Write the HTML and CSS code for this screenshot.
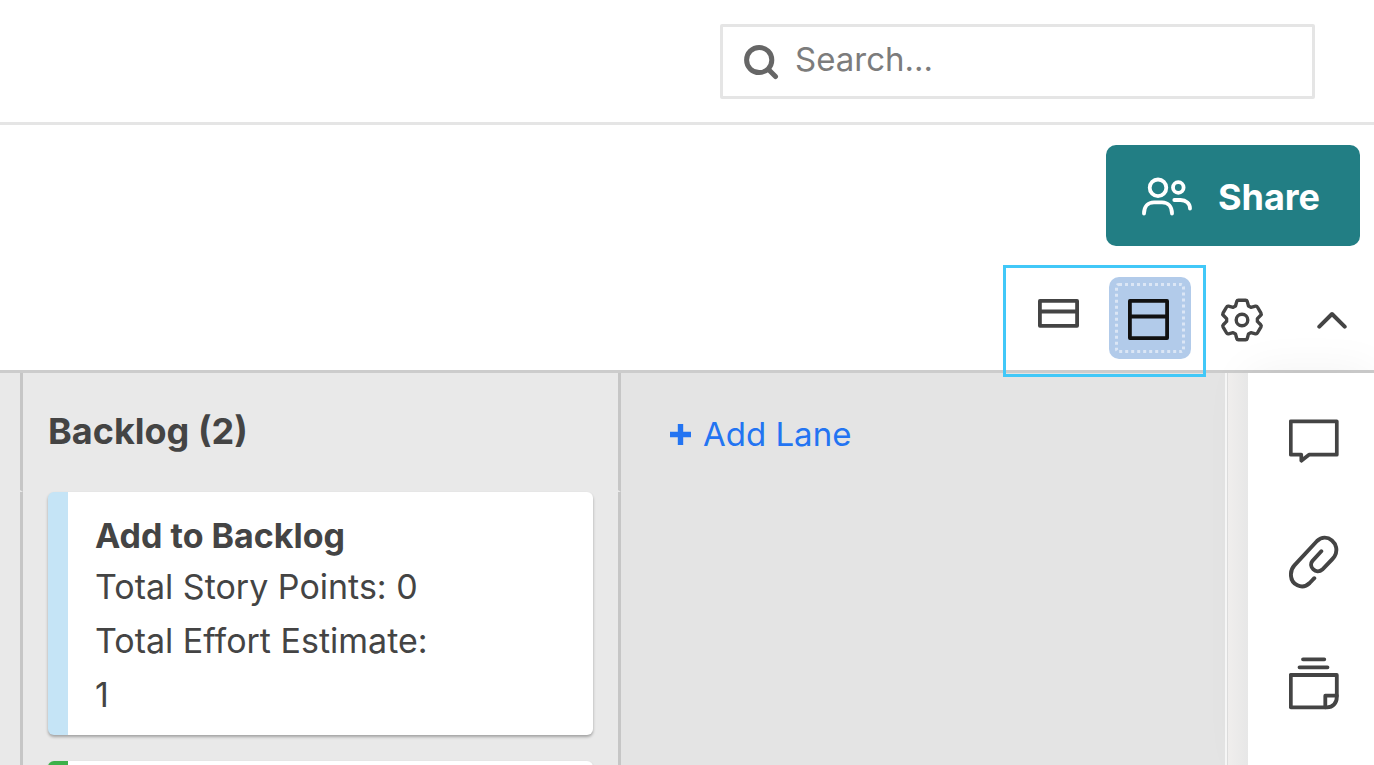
FILE: index.html
```html
<!DOCTYPE html>
<html lang="en">
<head>
    <meta charset="UTF-8">
    <meta name="viewport" content="width=device-width, initial-scale=1.0">
    <title>Board - Card View</title>
    <link rel="stylesheet" href="styles.css">
</head>
<body>
    <!-- Header -->
    <header class="header">
        <label class="search">
            <svg width="35" height="36" viewBox="0 0 35 36" fill="none" stroke="#666" stroke-width="5" stroke-linecap="round">
                <circle cx="15.2" cy="16" r="12.6"/>
                <path d="M25 26L31.5 32.5"/>
            </svg>
            <input type="search" class="search-input" placeholder="Search..." aria-label="Search">
        </label>
    </header>

    <!-- Share -->
    <div class="actions">
        <button type="button" class="share">
            <svg width="50" height="39" viewBox="0 0 50 39" fill="none" stroke="#fff" stroke-width="3.8" stroke-linecap="round">
                <circle cx="16" cy="10.8" r="8.3"/>
                <circle cx="36.3" cy="10.5" r="5.3"/>
                <path d="M2 36.5C2 29.5 6 25.3 12 25.3H20C26 25.3 30 29.5 30 36.5"/>
                <path d="M32.3 23H38.5C44 23 48 26.5 48 31.5"/>
            </svg>
            Share
        </button>
    </div>

    <!-- Toolbar -->
    <div class="toolbar">
        <div class="view-switch">
            <button type="button" class="view-button" aria-label="Compact view">
                <svg width="41" height="41" viewBox="0 0 41 41" fill="none" stroke="#444" stroke-width="3.8" stroke-linejoin="round">
                    <path d="M1.9 1.9H39.1V26.8H1.9ZM1.9 12.5H39.1"/>
                </svg>
            </button>
            <button type="button" class="view-button selected" aria-label="Full view">
                <svg width="41" height="41" viewBox="0 0 41 41" fill="none" stroke="#111" stroke-width="3.8" stroke-linejoin="round">
                    <path d="M1.9 1.9H39.1V39.1H1.9ZM1.9 17.5H39.1"/>
                </svg>
            </button>
        </div>
        <button type="button" class="icon-button settings" aria-label="Settings">
            <svg width="44" height="44" viewBox="-22 -22 44 44" fill="none" stroke="#444" stroke-width="3.4" stroke-linejoin="round">
                <path d="M-6.5-14L-5.2-18.6Q-4.8-19.8-3.6-19.8H3.6Q4.8-19.8 5.2-18.6L6.5-14L8.9-12.6L13.5-13.8Q14.8-14.1 15.4-13L19-6.8Q19.6-5.7 18.7-4.8L15.4-1.4V1.4L18.7 4.8Q19.6 5.7 19 6.8L15.4 13Q14.8 14.1 13.5 13.8L8.9 12.6L6.5 14L5.2 18.6Q4.8 19.8 3.6 19.8H-3.6Q-4.8 19.8-5.2 18.6L-6.5 14L-8.9 12.6L-13.5 13.8Q-14.8 14.1-15.4 13L-19 6.8Q-19.6 5.7-18.7 4.8L-15.4 1.4V-1.4L-18.7-4.8Q-19.6-5.7-19-6.8L-15.4-13Q-14.8-14.1-13.5-13.8L-8.9-12.6Z"/>
                <circle r="5.8"/>
            </svg>
        </button>
        <button type="button" class="icon-button" aria-label="Collapse">
            <svg width="30" height="18" viewBox="0 0 30 18" fill="none" stroke="#444" stroke-width="4" stroke-linecap="round" stroke-linejoin="round">
                <path d="M2.3 15.7L15 3L27.7 15.7"/>
            </svg>
        </button>
    </div>

    <!-- Board -->
    <main class="board">
        <section class="lane lane-previous">
            <div class="lane-head"></div>
            <div class="lane-body"></div>
        </section>

        <section class="lane lane-backlog">
            <div class="lane-head">
                <h2 class="lane-title">Backlog (2)</h2>
            </div>
            <div class="lane-body">
                <article class="card card-blue">
                    <h3 class="card-title">Add to Backlog</h3>
                    <p class="card-text">Total Story Points: 0</p>
                    <p class="card-text">Total Effort Estimate:<br>1</p>
                </article>
                <article class="card card-green"></article>
            </div>
        </section>

        <section class="new-lane">
            <button type="button" class="add-lane">
                <svg width="21" height="21" viewBox="0 0 21 21" fill="none" stroke="#2374f2" stroke-width="5.4">
                    <path d="M0 10.5H21M10.5 0V21"/>
                </svg>
                Add Lane
            </button>
        </section>

        <div class="gutter"></div>

        <!-- Side rail -->
        <aside class="rail">
            <button type="button" class="rail-button" aria-label="Comments">
                <svg width="50" height="44" viewBox="0 0 50 44" fill="none" stroke="#444" stroke-width="3.7" stroke-linejoin="round">
                    <path d="M1.8 2.3H47.8V35.7H20L12.3 41.7V35.7H1.8Z"/>
                </svg>
            </button>
            <button type="button" class="rail-button" aria-label="Attachments">
                <svg width="50" height="54" viewBox="0 0 50 54" fill="none" stroke="#444" stroke-width="3.9" stroke-linecap="round">
                    <path d="M25.3 43.2L20.7 48C13 55.5 1.9 49.5 1.9 39.5C1.9 36 3 33 5.4 30.4L28 6C37.5-3.5 52.5 9 45.6 21.3C45 22.3 44 23.5 43 24.5L33.3 34.5C27 40 19 31.5 23.4 26L32.3 16.3"/>
                </svg>
            </button>
            <button type="button" class="rail-button" aria-label="Proofs">
                <svg width="50" height="53" viewBox="0 0 50 53" fill="none" stroke="#444" stroke-width="3.8" stroke-linecap="round" stroke-linejoin="round">
                    <path d="M14 2.3H35.3M10.5 10.3H38.5"/>
                    <path d="M1.8 18H47.8V40C47.8 46 44 50.3 38 50.3H1.8Z"/>
                    <path d="M47.8 38.7H36.3V50.3"/>
                </svg>
            </button>
        </aside>
    </main>
</body>
</html>
```
FILE: styles.css
```css
* {
    box-sizing: border-box;
}

body {
    margin: 0;
    height: 100vh;
    display: flex;
    flex-direction: column;
    background-color: #fff;
    color: #444;
    font-family: Inter, "Liberation Sans", sans-serif;
    font-size: 34px;
}

button {
    padding: 0;
    border: none;
    background: none;
    font: inherit;
    cursor: pointer;
}

svg {
    display: block;
    flex: none;
}

h2, h3, p {
    margin: 0;
}

/* Header */
.header {
    display: flex;
    justify-content: flex-end;
    padding: 24px 59px 23px;
    border-bottom: 3px solid #e5e5e5;
}

.search {
    display: flex;
    align-items: center;
    gap: 16px;
    width: 595px;
    height: 75px;
    padding: 0 21px;
    border: 3px solid #e5e5e5;
    border-radius: 2px;
}

.search-input {
    flex: 1;
    min-width: 0;
    padding: 0 0 6px;
    border: none;
    outline: none;
    background: none;
    color: #444;
    font: inherit;
    font-size: 33px;
}

.search-input::placeholder {
    color: #7c7c7c;
}

/* Share */
.actions {
    display: flex;
    justify-content: flex-end;
    padding: 20px 14px 0;
}

.share {
    display: flex;
    align-items: center;
    justify-content: center;
    gap: 26px;
    width: 254px;
    height: 101px;
    padding: 2px 4px 0 0;
    border-radius: 10px;
    background-color: #227e84;
    color: #fff;
    font-size: 36px;
    font-weight: 700;
}

/* Toolbar */
.toolbar {
    display: flex;
    justify-content: flex-end;
    align-items: center;
    height: 127px;
    padding: 24px 27px 0 0;
    border-bottom: 3px solid #ccc;
}

.view-switch {
    position: relative;
    z-index: 2;
    display: flex;
    align-self: flex-start;
    gap: 8px;
    margin-top: -5px;
    padding: 9px 12px 15px 13px;
    border: 3px solid #41c8f8;
}

.view-button {
    display: flex;
    align-items: center;
    justify-content: center;
    width: 82px;
    height: 82px;
    padding: 2px 4px 0 0;
    border-radius: 10px;
}

.view-button.selected {
    background-color: #b2cbea;
    outline: 3px dotted #dbe6f5;
    outline-offset: -9px;
}

.icon-button {
    position: relative;
    z-index: 2;
}

.settings {
    margin: 0 53px 0 14px;
}

/* Board */
.board {
    flex: 1;
    display: flex;
    min-height: 0;
}

.lane {
    display: flex;
    flex-direction: column;
    flex: none;
    overflow: hidden;
    background-color: #e9e9e9;
}

.lane-previous {
    width: 23px;
}

.lane-backlog {
    width: 598px;
}

.lane-head {
    flex: none;
    height: 119px;
    padding: 36px 25px 0;
    border-right: 3px solid #c6c6c6;
    border-bottom: 2px solid #e9e9e9;
}

.lane-body {
    flex: 1;
    padding: 0 25px;
    border-right: 3px solid #c6c6c6;
}

.lane-previous .lane-head,
.lane-previous .lane-body {
    padding: 0;
}

.lane-title {
    font-size: 36px;
    line-height: 44px;
}

/* Cards */
.card {
    min-height: 243px;
    margin-bottom: 26px;
    padding: 19px 27px 13px;
    border-left: 20px solid;
    border-radius: 6px;
    background-color: #fff;
    box-shadow: 0 2px 3px rgba(0, 0, 0, 0.3);
}

.card-blue {
    border-left-color: #c5e4f6;
}

.card-green {
    border-left-color: #3db14a;
}

.card-title {
    font-size: 34px;
    line-height: 49px;
}

.card-text {
    line-height: 54px;
}

.new-lane {
    flex: 1;
    padding: 41px 49px;
    background-color: #e4e4e4;
}

.add-lane {
    display: flex;
    align-items: center;
    gap: 12px;
    color: #2374f2;
    font-size: 33px;
}

.gutter {
    position: relative;
    z-index: 1;
    width: 23px;
    border-left: 2px solid #f6f6f6;
    background: linear-gradient(to right, #dcdcdc 1px, #f0eeed 1px, #e7e7e7);
}

/* Side rail */
.rail {
    display: flex;
    flex-direction: column;
    align-items: center;
    gap: 67px;
    width: 126px;
    padding: 41px 0;
    background-color: #fff;
    box-shadow: 0 0 48px rgba(0, 0, 0, 0.06);
}

.rail-button {
    display: flex;
    align-items: center;
    justify-content: center;
    width: 60px;
    height: 54px;
    margin-left: 6px;
}
```
